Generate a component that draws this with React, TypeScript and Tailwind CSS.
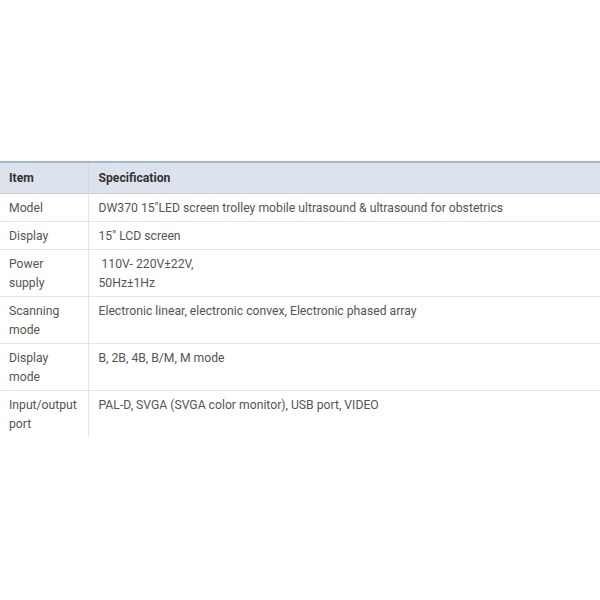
const rows: [string, string[]][] = [
  ["Model", ["DW370 15\"LED screen trolley mobile ultrasound & ultrasound for obstetrics"]],
  ["Display", ["15\" LCD screen"]],
  ["Power supply", ["\u00a0110V- 220V\u00b122V,", "50Hz\u00b11Hz"]],
  ["Scanning mode", ["Electronic linear, electronic convex, Electronic phased array"]],
  ["Display mode", ["B, 2B, 4B, B/M, M mode"]],
  ["Input/output port", ["PAL-D, SVGA (SVGA color monitor), USB port, VIDEO"]],
];

export default function App() {
  return (
    <div className="w-[600px] h-[600px] bg-white pt-[161px] overflow-hidden font-['Roboto','Liberation_Sans',sans-serif] text-[12.2px] leading-[19px]">
      <table className="w-full border-collapse">
        <thead>
          <tr className="bg-[#dce3ed] border-t-2 border-t-[#9fbbd6] border-b border-b-[#c9ccd0]">
            <th className="w-[88px] text-left font-bold text-[#333] pl-[9px] pr-[9px] pt-[6px] pb-[5px] border-r border-r-[#d4d8dd]">Item</th>
            <th className="text-left font-bold text-[#333] pl-[10px] pt-[6px] pb-[5px]">Specification</th>
          </tr>
        </thead>
        <tbody>
          {rows.map(([item, spec], i) => (
            <tr key={item} className={i < rows.length - 1 ? "border-b border-b-[#e4e4e4]" : ""}>
              <td className="w-[88px] align-top text-[#555] pl-[9px] pr-[9px] pt-[5px] pb-[3px] border-r border-r-[#e4e4e4]">{item}</td>
              <td className="align-top text-[#555] pl-[10px] pt-[5px] pb-[3px]">
                {spec.map((s) => (
                  <div key={s}>{s}</div>
                ))}
              </td>
            </tr>
          ))}
        </tbody>
      </table>
    </div>
  );
}
